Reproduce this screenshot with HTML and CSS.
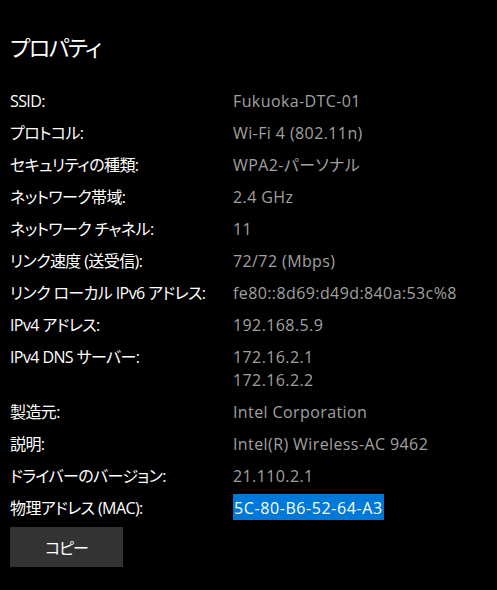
FILE: index.html
```html
<!DOCTYPE html>
<html lang="ja">
<head>
<meta charset="utf-8">
<link rel="stylesheet" href="styles.css">
</head>
<body>
<main class="panel">
  <h1 class="title">プロパティ</h1>
  <dl class="props">
    <dt>SSID:</dt><dd>Fukuoka-DTC-01</dd>
    <dt>プロトコル:</dt><dd>Wi-Fi 4 (802.11n)</dd>
    <dt>セキュリティの種類:</dt><dd>WPA2-パーソナル</dd>
    <dt>ネットワーク帯域:</dt><dd>2.4 GHz</dd>
    <dt>ネットワーク チャネル:</dt><dd>11</dd>
    <dt>リンク速度 (送受信):</dt><dd>72/72 (Mbps)</dd>
    <dt>リンク ローカル IPv6 アドレス:</dt><dd>fe80::8d69:d49d:840a:53c%8</dd>
    <dt>IPv4 アドレス:</dt><dd>192.168.5.9</dd>
    <dt>IPv4 DNS サーバー:</dt><dd>172.16.2.1<br>172.16.2.2</dd>
    <dt>製造元:</dt><dd>Intel Corporation</dd>
    <dt>説明:</dt><dd>Intel(R) Wireless-AC 9462</dd>
    <dt>ドライバーのバージョン:</dt><dd>21.110.2.1</dd>
    <dt>物理アドレス (MAC):</dt><dd><span class="selected">5C-80-B6-52-64-A3</span></dd>
  </dl>
  <button class="copy" type="button">コピー</button>
</main>
</body>
</html>
```

FILE: styles.css
```css
html, body {
  margin: 0;
  padding: 0;
  background: #000;
}
body {
  font-family: "Open Sans", "Noto Sans CJK JP", sans-serif;
  font-feature-settings: "palt" 1;
  color: #fff;
}
.panel {
  padding: 32px 0 0 10px;
}
.title {
  margin: 0;
  font-family: "Noto Sans CJK JP", sans-serif;
  font-feature-settings: "palt" 1;
  font-weight: 400;
  font-size: 22px;
  line-height: 28px;
  letter-spacing: -1.5px;
}
.props {
  margin: 30px 0 0 0;
  display: grid;
  grid-template-columns: 223px 1fr;
  row-gap: 9px;
  font-size: 16px;
  line-height: 23px;
}
.props dt {
  margin: 0;
  color: #fff;
  letter-spacing: -0.6px;
}
.props dd {
  margin: 0;
  color: #a0a0a0;
  letter-spacing: 0.4px;
}
.selected {
  background: #0078d7;
  color: #fff;
  padding: 3px 1px 1px;
  letter-spacing: 0.6px;
}
.copy {
  margin-top: 7px;
  width: 113px;
  height: 40px;
  border: 0;
  background: #333;
  color: #fff;
  font-family: "Noto Sans CJK JP", sans-serif;
  font-feature-settings: "palt" 1;
  font-size: 16px;
  letter-spacing: -1px;
  padding: 0;
}
```
